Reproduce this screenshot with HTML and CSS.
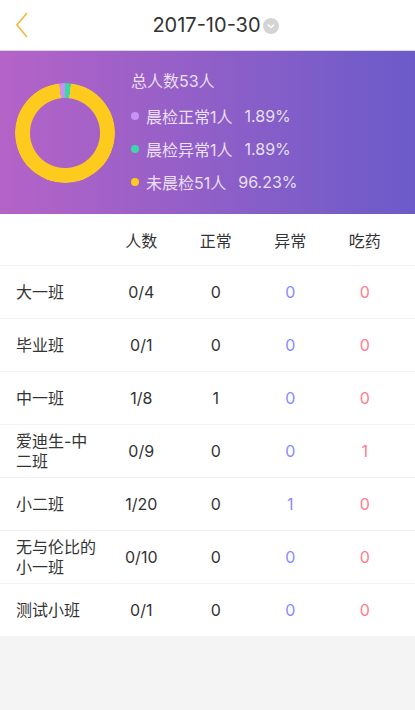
FILE: index.html
```html
<!DOCTYPE html>
<html lang="zh-CN">
<head>
  <meta charset="UTF-8" />
  <title>晨检统计</title>
  <link rel="stylesheet" href="styles.css">
</head>
<body>

  <!-- Header -->
  <header class="topbar">
    <a class="back" href="#">
      <svg width="14" height="28" viewBox="0 0 14 28"><path d="M12 2 L2 14 L12 26" fill="none" stroke="#f6b73c" stroke-width="1.6"/></svg>
    </a>
    <div class="date">
      <span>2017-10-30</span>
      <svg class="drop" width="16" height="16" viewBox="0 0 16 16"><circle cx="8" cy="8" r="8" fill="#d4d4d4"/><path d="M4.8 6.6 L8 9.6 L11.2 6.6" fill="none" stroke="#fff" stroke-width="1.4"/></svg>
    </div>
  </header>

  <!-- Summary -->
  <section class="summary">
    <div class="donut"></div>
    <div class="legend">
      <div class="total">总人数53人</div>
      <div class="item"><i class="dot purple"></i>晨检正常1人<span class="pct">1.89%</span></div>
      <div class="item"><i class="dot green"></i>晨检异常1人<span class="pct">1.89%</span></div>
      <div class="item"><i class="dot yellow"></i>未晨检51人<span class="pct">96.23%</span></div>
    </div>
  </section>

  <!-- Table -->
  <section class="table">
    <div class="row head">
      <div></div>
      <div class="num">人数</div>
      <div class="num">正常</div>
      <div class="num">异常</div>
      <div class="num">吃药</div>
    </div>
    <div class="row">
      <div class="name">大一班</div>
      <div class="num">0/4</div>
      <div class="num">0</div>
      <div class="num blue">0</div>
      <div class="num pink">0</div>
    </div>
    <div class="row">
      <div class="name">毕业班</div>
      <div class="num">0/1</div>
      <div class="num">0</div>
      <div class="num blue">0</div>
      <div class="num pink">0</div>
    </div>
    <div class="row">
      <div class="name">中一班</div>
      <div class="num">1/8</div>
      <div class="num">1</div>
      <div class="num blue">0</div>
      <div class="num pink">0</div>
    </div>
    <div class="row">
      <div class="name">爱迪生-中二班</div>
      <div class="num">0/9</div>
      <div class="num">0</div>
      <div class="num blue">0</div>
      <div class="num pink">1</div>
    </div>
    <div class="row">
      <div class="name">小二班</div>
      <div class="num">1/20</div>
      <div class="num">0</div>
      <div class="num blue">1</div>
      <div class="num pink">0</div>
    </div>
    <div class="row">
      <div class="name">无与伦比的小一班</div>
      <div class="num">0/10</div>
      <div class="num">0</div>
      <div class="num blue">0</div>
      <div class="num pink">0</div>
    </div>
    <div class="row">
      <div class="name">测试小班</div>
      <div class="num">0/1</div>
      <div class="num">0</div>
      <div class="num blue">0</div>
      <div class="num pink">0</div>
    </div>
  </section>

</body>
</html>
```

FILE: styles.css
```css
body {
  margin: 0;
  padding: 0;
  background: #f4f4f4;
  font-family: Inter, "Noto Sans CJK SC", sans-serif;
  color: #333;
}

.topbar {
  height: 50px;
  background: #fff;
  border-bottom: 1px solid #ddd5e6;
  display: flex;
  align-items: center;
  justify-content: center;
  position: relative;
}

.back {
  position: absolute;
  left: 15px;
  top: 11px;
  display: block;
  line-height: 0;
}

.date {
  display: flex;
  align-items: center;
  font-size: 20px;
  margin-left: 16px;
}

.date .drop {
  margin-left: 2px;
  margin-top: 1px;
}

.summary {
  height: 163px;
  background: linear-gradient(90deg, #b563c7, #6b5bc9);
  display: flex;
  align-items: center;
}

.donut {
  width: 100px;
  height: 100px;
  margin-left: 15px;
  border-radius: 50%;
  background: conic-gradient(from -6.8deg, #c792f3 0 6.8deg, #3bd7a9 6.8deg 13.6deg, #fdcb1d 13.6deg 360deg);
  -webkit-mask: radial-gradient(circle, transparent 34.5px, #000 35.5px);
  mask: radial-gradient(circle, transparent 34.5px, #000 35.5px);
}

.legend {
  margin-left: 16px;
  color: rgba(255, 255, 255, 0.82);
  font-size: 16px;
  margin-top: -2px;
}

.total {
  height: 33px;
  line-height: 33px;
  margin-bottom: 1px;
}

.item {
  display: flex;
  align-items: center;
  height: 33px;
}

.dot {
  width: 8px;
  height: 8px;
  border-radius: 50%;
  margin: 0 7px 0 0;
}

.purple { background: #c792f3; }
.green { background: #3bd7a9; }
.yellow { background: #fdcb1d; }

.pct {
  margin-left: 12px;
}

.table {
  background: #fff;
}

.row {
  display: grid;
  grid-template-columns: 88px repeat(4, 74.5px);
  padding-left: 16px;
  align-items: center;
  height: 52px;
  border-bottom: 1px solid #f2f2f2;
  font-size: 16px;
}

.row.head {
  height: 51px;
}

.row:last-child {
  border-bottom: none;
}

.name {
  width: 84px;
  line-height: 20px;
}

.num {
  text-align: center;
}

.blue { color: #8a8aff; }
.pink { color: #ff7b8e; }
```
